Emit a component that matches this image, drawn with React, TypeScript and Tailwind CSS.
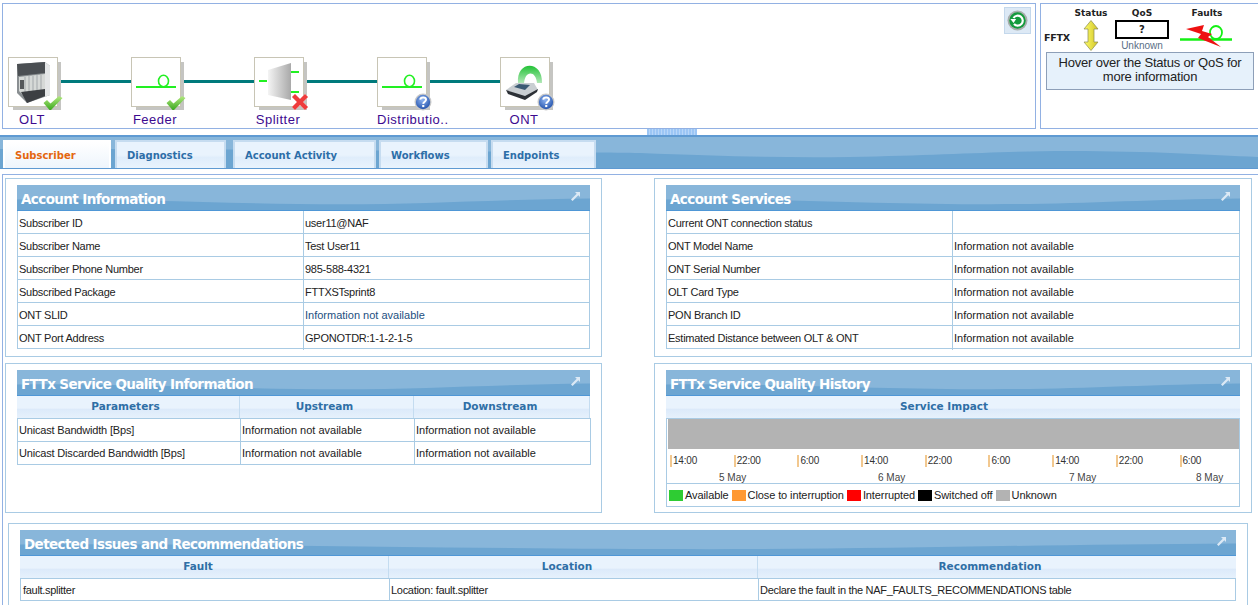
import React from "react";

const GREEN = "#22f022";
const NA = "Information not available";

function Wave() {
  return (
    <svg className="absolute inset-0 h-full w-full" viewBox="0 0 600 26" preserveAspectRatio="none">
      <path d="M0 15 C120 14 220 20 340 20 C430 20 500 15 600 14 L600 26 L0 26 Z" fill="#6ca5d1" />
    </svg>
  );
}

function PanelHeader({ title }: { title: string }) {
  return (
    <div className="relative h-[26px] bg-[#88b6da] border-b border-[#4f97d6] overflow-hidden">
      <Wave />
      <div className="relative flex h-full items-center justify-between pl-[4px] pr-[10px]">
        <span className="pt-[3px] font-['DejaVu_Sans'] text-[13.5px] font-bold text-white tracking-[-0.6px]">{title}</span>
        <svg width="9" height="9" viewBox="0 0 9 9" className="mb-[3px]">
          <path d="M4 0 H9 V5 L7.3 3.3 L1.6 9 L0 7.4 L5.7 1.7 Z" fill="#dce9f5" />
        </svg>
      </div>
    </div>
  );
}

function InfoTable({ rows }: { rows: [string, string, boolean?][] }) {
  return (
    <div className="border-l border-[#a9cbe4] border-r w-full">
      {rows.map(([label, value, link]) => (
        <div key={label} className="grid grid-cols-[286px_1fr] h-[23px] border-b border-[#a9cbe4]">
          <div className="border-r border-[#a9cbe4] pl-[1px] leading-[24px] tracking-[-0.25px] text-[#222]">{label}</div>
          <div
            className={`pl-[1px] leading-[24px] ${value === NA ? "" : "tracking-[-0.25px]"} ${
              link ? "text-[#23507f]" : "text-[#222]"
            }`}
          >
            {value}
          </div>
        </div>
      ))}
    </div>
  );
}

function ColHead({ label, className }: { label: string; className?: string }) {
  return (
    <div
      className={`h-[22px] bg-[linear-gradient(#e9f3fd_0%,#e9f3fd_55%,#dceafa_60%,#e6f1fc_100%)] border-r border-[#c4dcf0] text-center font-['DejaVu_Sans'] text-[10.5px] font-bold leading-[21px] text-[#2f6fa6] ${className ?? ""}`}
    >
      {label}
    </div>
  );
}

function Check() {
  return (
    <svg className="absolute left-[34px] top-[37px]" width="20" height="16" viewBox="0 0 20 16">
      <defs>
        <linearGradient id="chk" x1="0" y1="0" x2="0" y2="1">
          <stop offset="0" stopColor="#b4ea80" />
          <stop offset="1" stopColor="#3aa81e" />
        </linearGradient>
      </defs>
      <path d="M0.5 8 L4 5 L7.5 8.5 L16 1 L19.5 3 L8 15 L6.5 15 Z" fill="url(#chk)" />
    </svg>
  );
}

function Cross() {
  return (
    <svg className="absolute left-[36px] top-[35px]" width="18" height="18" viewBox="0 0 18 18">
      <path d="M1 4 L4 1 L9 6 L14 1 L17 4 L12 9 L17 14 L14 17 L9 12 L4 17 L1 14 L6 9 Z" fill="#ee3c3c" stroke="#f58a8a" strokeWidth="0.6" />
    </svg>
  );
}

function Question() {
  return (
    <svg className="absolute left-[36px] top-[35px]" width="18" height="18" viewBox="0 0 18 18">
      <defs>
        <radialGradient id="qb" cx="0.45" cy="0.35" r="0.7">
          <stop offset="0" stopColor="#8fb5f2" />
          <stop offset="1" stopColor="#1f4ea8" />
        </radialGradient>
      </defs>
      <circle cx="9" cy="9" r="8.5" fill="#c9c9c9" />
      <circle cx="9" cy="9" r="7.2" fill="url(#qb)" />
      <path d="M6.2 6.6 C6.6 3.8 12 3.8 12 6.8 C12 8.6 9.4 8.8 9.2 10.8" fill="none" stroke="#fff" strokeWidth="2" />
      <rect x="8.2" y="12" width="2.1" height="2.1" fill="#fff" />
    </svg>
  );
}

function FiberIcon() {
  return (
    <svg width="48" height="48" viewBox="0 0 48 48">
      <path d="M4 29 H44" stroke={GREEN} strokeWidth="2" />
      <ellipse cx="31.5" cy="23" rx="5" ry="5.8" fill="none" stroke={GREEN} strokeWidth="1.6" />
    </svg>
  );
}

function OltIcon() {
  return (
    <svg width="48" height="48" viewBox="0 0 48 48">
      <path d="M8 6 L36 4 L41 8 L41 37 L18 45 L8 35 Z" fill="#8a8f92" />
      <path d="M8 6 L36 4 L36 15 L9 18 Z" fill="#4b4f53" />
      <path d="M36 4 L41 8 L41 37 L36 39 Z" fill="#e4e6e7" />
      <path d="M10 19 L36 16 L36 34 L14 37 L10 33 Z" fill="#d6d9d7" />
      <path d="M16 19 V36 M20 18 V36 M24 18 V35 M28 17 V35 M32 17 V34" stroke="#a3a8ab" strokeWidth="1" />
      <path d="M12 34 L36 31 L36 38 L18 45 Z" fill="#3c3f43" />
      <rect x="11" y="22" width="4" height="9" fill="#55585b" />
    </svg>
  );
}

function SplitterIcon() {
  return (
    <svg width="48" height="48" viewBox="0 0 48 48">
      <defs>
        <linearGradient id="spl" x1="0" y1="0" x2="1" y2="0">
          <stop offset="0" stopColor="#f4f4f4" />
          <stop offset="1" stopColor="#a9a9a9" />
        </linearGradient>
      </defs>
      <path d="M13 12 L36 5 L36 42 L13 37 Z" fill="url(#spl)" />
      <path d="M4 23 H12" stroke={GREEN} strokeWidth="2" />
      <path d="M36 14 H44 M36 34 H44" stroke={GREEN} strokeWidth="2" />
    </svg>
  );
}

function OntIcon() {
  return (
    <svg width="48" height="48" viewBox="0 0 48 48">
      <defs>
        <linearGradient id="arc" x1="0" y1="0" x2="0" y2="1">
          <stop offset="0" stopColor="#22c236" />
          <stop offset="1" stopColor="#c2ecc6" />
        </linearGradient>
      </defs>
      <path d="M17 25 C15 2 42 2 41 25 L36 25 C35 12 23 12 23 27 Z" fill="url(#arc)" />
      <path d="M5 32 L15 25 L33 25 L37 32 L24 40 Z" fill="#c9ced2" />
      <path d="M5 32 L24 38 L37 31 L36 34 L24 42 L7 36 Z" fill="#2c3036" />
      <path d="M13 29 L18 26 L29 27 L24 32 Z" fill="#3b5a74" />
    </svg>
  );
}

const NODES = [
  { label: "OLT", icon: <OltIcon />, badge: <Check /> },
  { label: "Feeder", icon: <FiberIcon />, badge: <Check /> },
  { label: "Splitter", icon: <SplitterIcon />, badge: <Cross /> },
  { label: "Distributio..", icon: <FiberIcon />, badge: <Question />, left: true },
  { label: "ONT", icon: <OntIcon />, badge: <Question /> },
];

function Topology() {
  return (
    <div className="flex items-start pl-[5px] pt-[53px]">
      {NODES.map((n, i) => (
        <React.Fragment key={n.label + i}>
          <div className="relative w-[50px] shrink-0">
            <div className="relative z-10 h-[50px] w-[50px] border border-[#c8c5b5] bg-white shadow-[4px_4px_0_-1px_#c5c5c2]">
              {n.icon}
              {n.badge}
            </div>
            <div
              className={`mt-[5px] flex text-[13px] leading-[15px] tracking-[0.5px] text-[#3d0a8f] whitespace-nowrap ${
                n.left ? "justify-start" : "justify-center pr-[2px]"
              }`}
            >
              {n.label}
            </div>
          </div>
          {i < NODES.length - 1 && <div className="mt-[23px] h-[3px] w-[73px] shrink-0 bg-[#007a7c]" />}
        </React.Fragment>
      ))}
    </div>
  );
}

function RefreshButton() {
  return (
    <div className="absolute right-[4px] top-[3px] flex h-[27px] w-[27px] items-center justify-center border border-[#c4d8ec] bg-[#dde9f5]">
      <svg width="21" height="21" viewBox="0 0 21 21">
        <circle cx="10.5" cy="10.5" r="10" fill="#a8aeac" />
        <circle cx="10.5" cy="10.5" r="8.2" fill="#149a3c" />
        <path d="M6.5 8 A5 5 0 1 1 7 14" fill="none" stroke="#fff" strokeWidth="2.2" />
        <path d="M3.4 9 L9.2 9 L6.5 13 Z" fill="#fff" />
      </svg>
    </div>
  );
}

function Legend() {
  return (
    <div className="flex-1 border-y border-l border-[#92b1e3] pl-[3px] pt-[4px] overflow-hidden">
      <div className="flex items-start font-['DejaVu_Sans'] text-[9px] font-bold text-[#222] h-[41px]">
        <div className="w-[35px] pt-[23px] text-[9.5px] tracking-[-0.2px]">FFTX</div>
        <div className="flex w-[24px] flex-col items-center">
          <span className="leading-[10px]">Status</span>
          <svg className="mt-[2px]" width="16" height="31" viewBox="0 0 16 31">
            <defs>
              <linearGradient id="arw" x1="0" y1="0" x2="1" y2="0">
                <stop offset="0" stopColor="#fdfd6a" />
                <stop offset="1" stopColor="#d2c428" />
              </linearGradient>
            </defs>
            <path d="M8 0.5 L15 9 H11 V22 H15 L8 30.5 L1 22 H5 V9 H1 Z" fill="url(#arw)" stroke="#8a8a50" strokeWidth="0.7" />
          </svg>
        </div>
        <div className="ml-[12px] flex w-[54px] flex-col items-center">
          <span className="leading-[10px]">QoS</span>
          <div className="mt-[2px] flex h-[19px] w-[54px] items-center justify-center border-2 border-black text-[10px] text-[#222]">?</div>
          <span className="mt-[1px] font-['Liberation_Sans'] text-[10px] font-normal leading-[12px] text-[#5a6e86]">Unknown</span>
        </div>
        <div className="ml-[11px] flex w-[52px] flex-col items-center">
          <span className="leading-[10px] pl-[2px]">Faults</span>
          <svg className="mt-[7px]" width="52" height="24" viewBox="0 0 52 24">
            <path d="M0 14.5 H52" stroke="#14f014" strokeWidth="2.4" />
            <ellipse cx="36" cy="7.5" rx="6" ry="6.5" fill="none" stroke="#14f014" strokeWidth="1.8" />
            <path d="M6 4 L24 0 L22 6 L32 9 L28 12 L41 22 L18 13 L21 9 Z" fill="#ee1111" />
          </svg>
        </div>
      </div>
      <div className="mt-[3px] ml-[2px] w-[208px] h-[38px] border border-[#8d9fb8] bg-[#e6f1fb] text-center text-[13px] leading-[14px] tracking-[-0.2px] pt-[3px] text-[#222]">
        Hover over the Status or QoS for more information
      </div>
    </div>
  );
}

const TABS = [
  { label: "Subscriber", w: "w-[108px]", active: true },
  { label: "Diagnostics", w: "w-[111px] ml-[4px]" },
  { label: "Account Activity", w: "w-[143px] ml-[7px]" },
  { label: "Workflows", w: "w-[109px] ml-[3px]" },
  { label: "Endpoints", w: "w-[105px] ml-[3px]" },
];

function Tabs() {
  return (
    <div className="relative mt-[6px] h-[34px] overflow-hidden border-t-2 border-[#5f9ad2] border-b border-b-[#5f9ad2] bg-[#88b6da]">
      <svg className="absolute inset-0 h-full w-full" viewBox="0 0 1258 31" preserveAspectRatio="none">
        <path
          d="M0 12 C300 12 560 15 640 16 C720 19 780 21 850 20 C950 18 1000 14 1070 14 C1150 14 1210 18 1258 20 L1258 31 L0 31 Z"
          fill="#6ca5d1"
        />
      </svg>
      <div className="relative flex pl-[3px] pt-[3px]">
        {TABS.map((t) => (
          <div
            key={t.label}
            className={`${t.w} h-[28px] border-x-2 border-t-2 pl-[10px] font-['DejaVu_Sans'] text-[10px] font-bold leading-[28px] ${
              t.active
                ? "border-white bg-[linear-gradient(#ffffff,#eef5fc)] text-[#e4660f]"
                : "border-[#c6dcf0] bg-[linear-gradient(#e9f3fd_0%,#e9f3fd_50%,#dfedfb_60%,#e9f3fd_100%)] text-[#2d6ea8]"
            }`}
          >
            {t.label}
          </div>
        ))}
      </div>
    </div>
  );
}

const ACCOUNT: [string, string, boolean?][] = [
  ["Subscriber ID", "user11@NAF"],
  ["Subscriber Name", "Test User11"],
  ["Subscriber Phone Number", "985-588-4321"],
  ["Subscribed Package", "FTTXSTsprint8"],
  ["ONT SLID", NA, true],
  ["ONT Port Address", "GPONOTDR:1-1-2-1-5"],
];

const SERVICES: [string, string, boolean?][] = [
  ["Current ONT connection status", ""],
  ["ONT Model Name", NA],
  ["ONT Serial Number", NA],
  ["OLT Card Type", NA],
  ["PON Branch ID", NA],
  ["Estimated Distance between OLT & ONT", NA],
];

const TICKS = ["14:00", "22:00", "6:00", "14:00", "22:00", "6:00", "14:00", "22:00", "6:00"];

const LEGEND = [
  { label: "Available", color: "bg-[#2ecc33]" },
  { label: "Close to interruption", color: "bg-[#ff9933]" },
  { label: "Interrupted", color: "bg-[#ff0000]" },
  { label: "Switched off", color: "bg-black" },
  { label: "Unknown", color: "bg-[#b3b3b3]" },
];

function QualityInfo() {
  const rows = ["Unicast Bandwidth [Bps]", "Unicast Discarded Bandwidth [Bps]"];
  return (
    <>
      <div className="grid grid-cols-[223px_174px_1fr] w-[573px]">
        <ColHead label="Parameters" className="pr-[5px]" />
        <ColHead label="Upstream" className="pr-[4px]" />
        <ColHead label="Downstream" className="pr-[3px]" />
      </div>
      <div className="border-l border-r border-t border-[#a9cbe4] w-[574px]">
        {rows.map((r) => (
          <div key={r} className="grid grid-cols-[223px_174px_1fr] h-[23px] border-b border-[#a9cbe4]">
            <div className="border-r border-[#a9cbe4] pl-[1px] leading-[22px] tracking-[-0.18px] text-[#222]">{r}</div>
            <div className="border-r border-[#a9cbe4] pl-[1px] leading-[22px] text-[#222]">{NA}</div>
            <div className="pl-[1px] leading-[22px] text-[#222]">{NA}</div>
          </div>
        ))}
      </div>
    </>
  );
}

function QualityHistory() {
  return (
    <>
      <ColHead label="Service Impact" className="border-r-0 pr-[18px]" />
      <div className="border-x border-b border-t border-[#a9cbe4] w-[574px] h-[89px] overflow-hidden">
        <div className="ml-[1px] h-[30px] bg-[#b3b3b3]" />
        <div className="mt-[6px] flex h-[12px] pl-[3px]">
          {TICKS.map((t, i) => (
            <div key={i} className="flex h-[12px] w-[63.7px] shrink-0">
              <span className="border-l-2 border-[#f2c88f] pl-[1px] text-[10px] leading-[12px] tracking-[-0.2px] text-[#333]">{t}</span>
            </div>
          ))}
        </div>
        <div className="flex h-[17px] text-[10px] leading-[22px] text-[#444] border-b border-[#a9cbe4]">
          <span className="ml-[52px] w-[159px]">5 May</span>
          <span className="w-[191px]">6 May</span>
          <span className="w-[127px]">7 May</span>
          <span>8 May</span>
        </div>
        <div className="flex items-center h-[22px] pl-[2px] gap-[2px] text-[#222] tracking-[-0.1px]">
          {LEGEND.map((l) => (
            <React.Fragment key={l.label}>
              <span className={`h-[11px] w-[14px] ${l.color}`} />
              <span className="mr-[1px]">{l.label}</span>
            </React.Fragment>
          ))}
        </div>
      </div>
    </>
  );
}

function Issues() {
  return (
    <div className="ml-[5px] mt-[10px] w-[1240px] border border-[#a9cbe4] px-[11px] pt-[6px] h-[90px]">
      <PanelHeader title="Detected Issues and Recommendations" />
      <div className="grid grid-cols-[369px_369px_1fr]">
        <ColHead label="Fault" className="pr-[12px]" />
        <ColHead label="Location" className="pr-[12px]" />
        <ColHead label="Recommendation" className="border-r-0 pr-[14px]" />
      </div>
      <div className="grid grid-cols-[369px_369px_1fr] h-[23px] border border-[#a9cbe4] text-[#222] leading-[22px] tracking-[-0.3px]">
        <div className="border-r border-[#a9cbe4] pl-[2px]">fault.splitter</div>
        <div className="border-r border-[#a9cbe4] pl-[1px]">Location: fault.splitter</div>
        <div className="pl-[1px]">Declare the fault in the NAF_FAULTS_RECOMMENDATIONS table</div>
      </div>
    </div>
  );
}

export default function App() {
  return (
    <div className="relative h-[605px] w-[1258px] overflow-hidden bg-white font-['Liberation_Sans',sans-serif] text-[11px]">
      {/* top strip */}
      <div className="flex h-[129px] pt-[3px]">
        <div className="relative ml-[2px] w-[1034px] border border-[#92b1e3]">
          <Topology />
          <RefreshButton />
        </div>
        <div className="w-[4px]" />
        <Legend />
      </div>

      <div className="ml-[647px] h-0 w-[50px]">
        <div className="h-[6px] bg-[repeating-linear-gradient(90deg,#9cc6f5_0,#9cc6f5_2px,#b8d6f8_2px,#b8d6f8_3px)]" />
      </div>

      <Tabs />

      {/* main content */}
      <div className="ml-[2px] mt-[5px] border-l border-t border-[#92b1e3] pt-[3px]">
        <div className="grid grid-cols-[597px_598px] gap-x-[52px] gap-y-[6px] pl-[2px]">
          <section className="h-[179px] border border-[#a9cbe4] px-[11px] pt-[6px]">
            <PanelHeader title="Account Information" />
            <InfoTable rows={ACCOUNT} />
          </section>
          <section className="h-[179px] border border-[#a9cbe4] px-[11px] pt-[6px]">
            <PanelHeader title="Account Services" />
            <InfoTable rows={SERVICES} />
          </section>
          <section className="h-[150px] border border-[#a9cbe4] px-[11px] pt-[6px]">
            <PanelHeader title="FTTx Service Quality Information" />
            <QualityInfo />
          </section>
          <section className="h-[150px] border border-[#a9cbe4] px-[11px] pt-[6px]">
            <PanelHeader title="FTTx Service Quality History" />
            <QualityHistory />
          </section>
        </div>
        <Issues />
      </div>
    </div>
  );
}
